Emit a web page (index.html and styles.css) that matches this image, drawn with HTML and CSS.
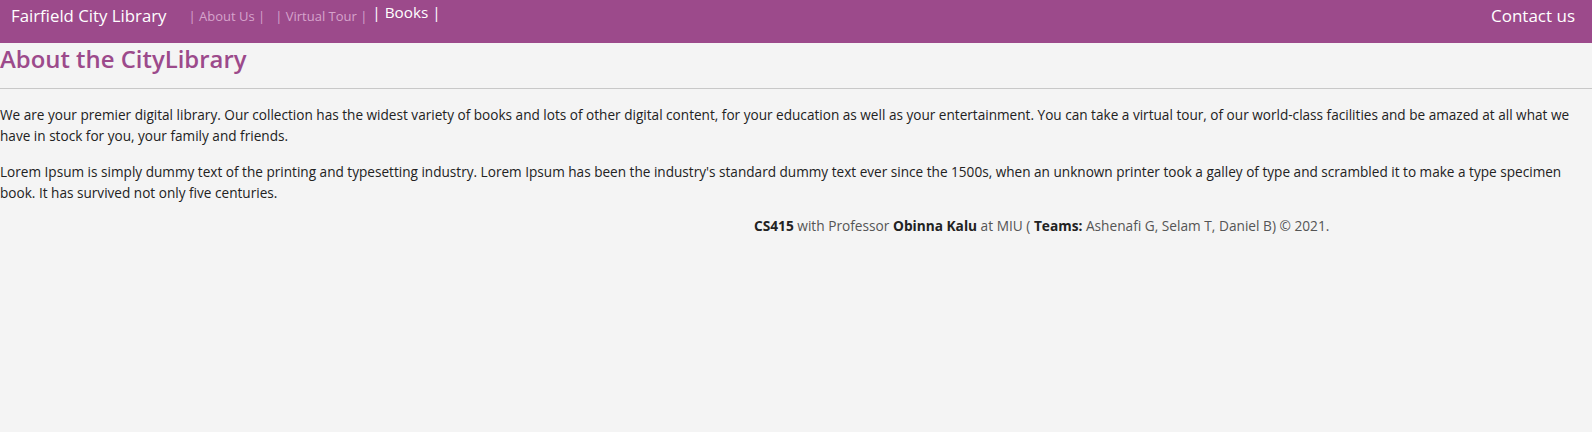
FILE: index.html
```html
<!DOCTYPE html>
<html lang="en">
<head>
<meta charset="utf-8">
<title>About the CityLibrary</title>
<link rel="stylesheet" href="styles.css">
</head>
<body>
<header class="topbar">
  <a class="brand" href="#">Fairfield City Library</a>
  <nav class="menu">
    <a class="menu-link" href="#">| About Us |</a>
    <a class="menu-link" href="#">| Virtual Tour |</a>
    <a class="menu-link menu-link-active" href="#">| Books |</a>
  </nav>
  <a class="contact" href="#">Contact us</a>
</header>
<main class="content">
  <h2 class="page-title">About the CityLibrary</h2>
  <hr class="divider">
  <p class="text">We are your premier digital library. Our collection has the widest variety of books and lots of other digital content, for your education as well as your entertainment. You can take a virtual tour, of our world-class facilities and be amazed at all what we have in stock for you, your family and friends.</p>
  <p class="text">Lorem Ipsum is simply dummy text of the printing and typesetting industry. Lorem Ipsum has been the industry's standard dummy text ever since the 1500s, when an unknown printer took a galley of type and scrambled it to make a type specimen book. It has survived not only five centuries.</p>
</main>
<footer class="footer">
  <b>CS415</b> with Professor <b>Obinna Kalu</b> at MIU ( <b>Teams:</b> Ashenafi G, Selam T, Daniel B) © 2021.
</footer>
</body>
</html>
```
FILE: styles.css
```css
html, body {
  margin: 0;
  padding: 0;
}
body {
  background: #f4f4f4;
  font-family: "Open Sans", "Noto Sans", sans-serif;
  color: #222;
}
a {
  text-decoration: none;
}
.topbar {
  display: flex;
  align-items: flex-start;
  height: 43px;
  background: #9c4a8b;
  padding: 0 17px 0 11px;
}
.brand {
  color: #fff;
  font-size: 16.8px;
  line-height: 24px;
  padding-top: 3.5px;
}
.menu {
  display: flex;
  align-items: flex-start;
  margin-left: 22px;
}
.menu-link {
  color: #d6a3cb;
  font-size: 13px;
  line-height: 20px;
  padding-top: 6px;
  margin-right: 10px;
}
.menu-link-active {
  color: #fff;
  font-size: 15.3px;
  line-height: 24px;
  padding-top: 0;
  margin-right: 0;
  margin-left: -5px;
}
.contact {
  margin-left: auto;
  color: #fff;
  font-size: 17px;
  line-height: 24px;
  padding-top: 4px;
}
.content {
  padding: 0;
}
.page-title {
  margin: 0;
  padding-top: 1px;
  color: #9c4a8b;
  font-size: 23.9px;
  font-weight: 600;
  line-height: 30px;
}
.divider {
  margin: 14px 0 0;
  border: 0;
  border-top: 1px solid #c8c8c8;
  height: 0;
}
.text {
  margin: 15px 0 15px;
  font-size: 13.6px;
  line-height: 21px;
  color: #222;
}
.text + .text {
  margin-top: 0;
}
.footer {
  padding-left: 754px;
  margin-top: -3px;
  font-size: 13.7px;
  line-height: 21px;
  color: #555;
}
.footer b {
  color: #222;
  font-weight: 700;
}
```
